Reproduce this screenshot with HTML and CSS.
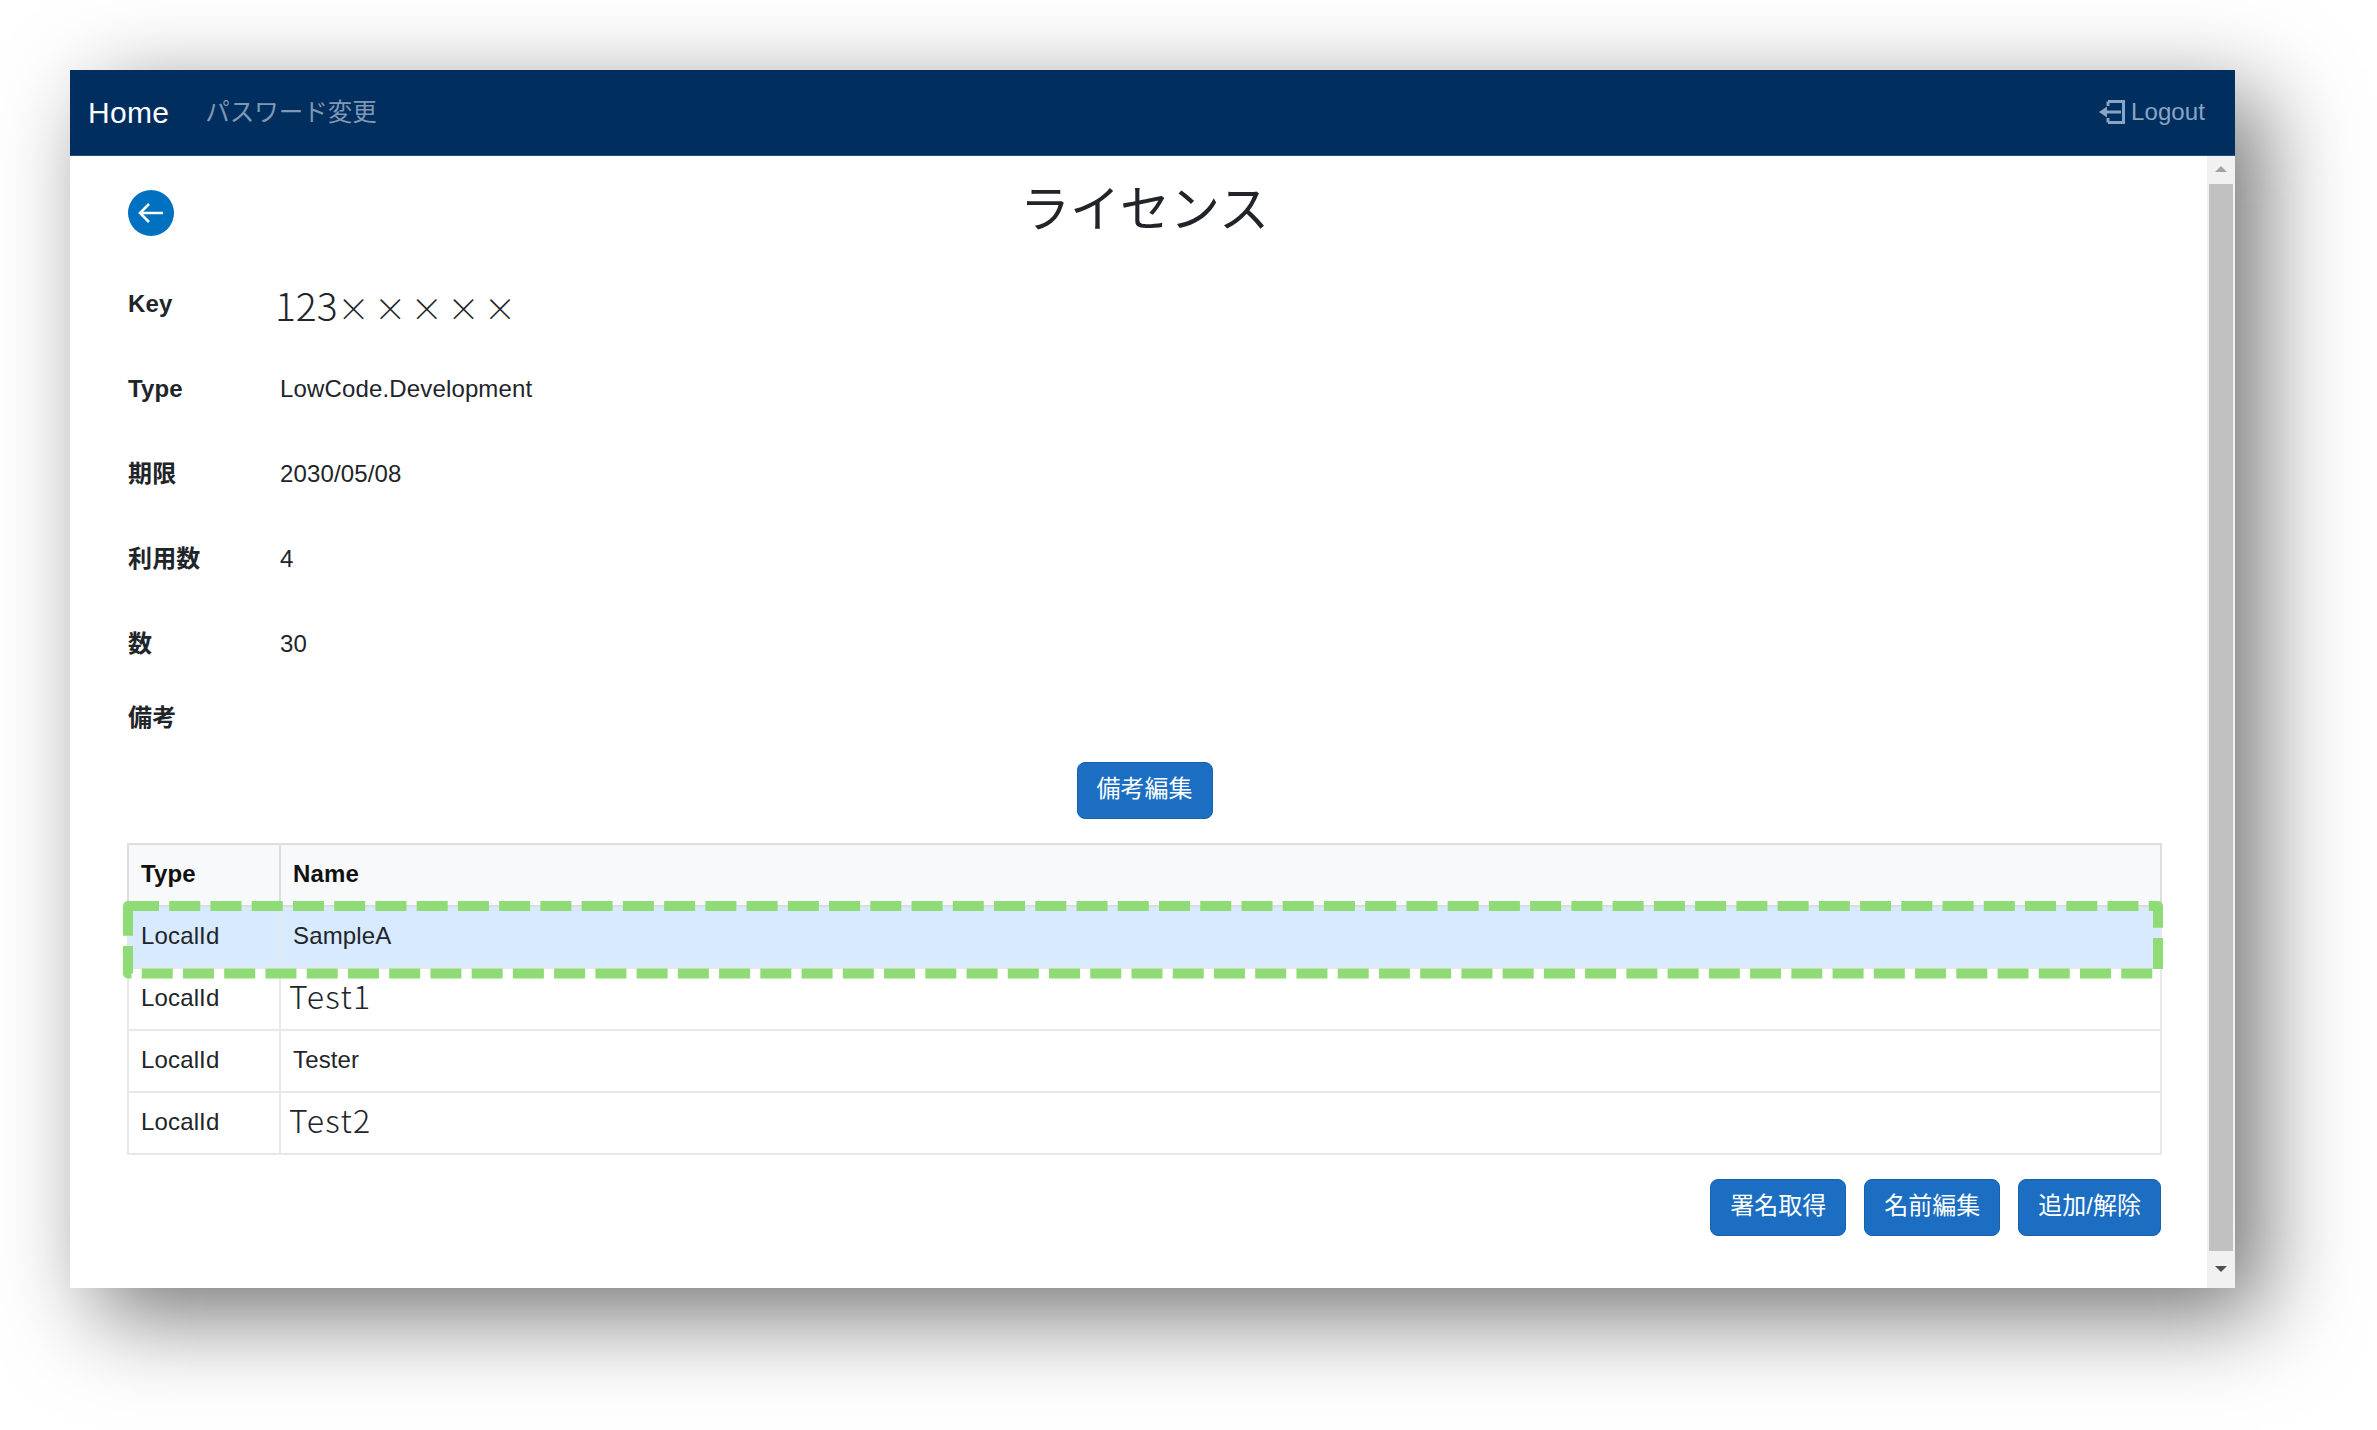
FILE: index.html
```html
<!DOCTYPE html>
<html lang="ja">
<head>
  <meta charset="UTF-8">
  <title>ライセンス</title>
  <link rel="stylesheet" href="styles.css">
</head>
<body>
  <div class="window">
    <nav class="topbar">
      <a class="brand" href="#">Home</a>
      <a class="nav-link" href="#">パスワード変更</a>
      <a class="logout" href="#">
        <svg class="logout-icon" width="26" height="24" viewBox="0 0 26 24">
          <path d="M9 1.5H24.5V22.5H9M9 1.5V6M9 22.5V18" fill="none" stroke="currentColor" stroke-width="3"/>
          <path d="M22 12H7" fill="none" stroke="currentColor" stroke-width="3"/>
          <path d="M0 12L8 6.5V17.5Z" fill="currentColor"/>
        </svg>
        Logout
      </a>
    </nav>

    <div class="pane">
      <main class="content">
        <div class="title-row">
          <a class="back-btn" href="#">
            <svg width="26" height="22" viewBox="0 0 26 22">
              <path d="M25 11H2M11 2L2 11L11 20" fill="none" stroke="#fff" stroke-width="2.6"/>
            </svg>
          </a>
          <h1 class="title">ライセンス</h1>
        </div>

        <div class="info-row">
          <div class="info-label">Key</div>
          <div class="info-value key-value">123<span class="key-mask">×××××</span></div>
        </div>
        <div class="info-row">
          <div class="info-label">Type</div>
          <div class="info-value">LowCode.Development</div>
        </div>
        <div class="info-row">
          <div class="info-label">期限</div>
          <div class="info-value">2030/05/08</div>
        </div>
        <div class="info-row">
          <div class="info-label">利用数</div>
          <div class="info-value">4</div>
        </div>
        <div class="info-row info-row-short">
          <div class="info-label">数</div>
          <div class="info-value">30</div>
        </div>
        <div class="info-row info-row-note">
          <div class="info-label">備考</div>
        </div>

        <div class="note-actions">
          <button class="btn">備考編集</button>
        </div>

        <div class="table-wrap">
          <table class="license-table">
            <thead>
              <tr><th class="col-type">Type</th><th>Name</th></tr>
            </thead>
            <tbody>
              <tr class="selected"><td>LocalId</td><td>SampleA</td></tr>
              <tr><td>LocalId</td><td><span class="mask-text">Test1</span></td></tr>
              <tr><td>LocalId</td><td>Tester</td></tr>
              <tr><td>LocalId</td><td><span class="mask-text">Test2</span></td></tr>
            </tbody>
          </table>
          <svg class="highlight" width="2040" height="78" viewBox="0 0 2040 78">
            <path d="M5 5H2035V72.5H5Z" fill="none" stroke="#8fdb76" stroke-width="10" stroke-linejoin="round" stroke-dasharray="31 10.24"/>
          </svg>
        </div>

        <div class="table-actions">
          <button class="btn">署名取得</button>
          <button class="btn">名前編集</button>
          <button class="btn">追加/解除</button>
        </div>
      </main>

      <div class="scrollbar">
        <div class="scroll-arrow scroll-up"></div>
        <div class="scroll-thumb"></div>
        <div class="scroll-arrow scroll-down"></div>
      </div>
    </div>
  </div>
</body>
</html>
```

FILE: styles.css
```css
html, body {
  height: 100%;
}

body {
  margin: 0;
  padding: 70px 142px 0 70px;
  box-sizing: border-box;
  background-color: #fff;
  color: #212529;
  font-family: "Liberation Sans", "Noto Sans CJK JP", sans-serif;
  font-size: 24px;
  line-height: 36px;
  overflow: hidden;
}

.window {
  height: 1218px;
  display: flex;
  flex-direction: column;
  background-color: #fff;
  box-shadow: 27px 27px 87px rgba(0, 0, 0, 0.55);
}

.topbar {
  height: 86px;
  box-sizing: border-box;
  border-bottom: 1px solid #24507f;
  background-color: #002e5f;
  display: flex;
  align-items: center;
  padding: 0 30px 0 18px;
}

.topbar a {
  text-decoration: none;
}

.brand {
  color: #fff;
  font-size: 30px;
  letter-spacing: 0.3px;
  margin-right: 36px;
}

.nav-link {
  color: #7f98b4;
  font-size: 24.5px;
}

.logout {
  margin-left: auto;
  padding-bottom: 2px;
  color: #8aa5c4;
  display: flex;
  align-items: center;
  letter-spacing: 0.1px;
}

.logout-icon {
  margin-right: 6px;
}

.pane {
  flex: 1;
  display: flex;
  min-height: 0;
}

.content {
  flex: 1;
  padding: 15px 46px 0 58px;
  min-width: 0;
}

.title-row {
  display: grid;
  grid-template-columns: 46px 1fr 46px;
  margin-bottom: 40px;
}

.back-btn {
  width: 46px;
  height: 46px;
  margin-top: 19px;
  border-radius: 50%;
  background-color: #0071c1;
  display: flex;
  align-items: center;
  justify-content: center;
}

.title {
  margin: 3px 0 0;
  text-align: center;
  font-size: 50px;
  font-weight: 400;
  line-height: 72px;
}

.info-row {
  display: flex;
  height: 36px;
  margin-bottom: 49px;
  letter-spacing: 0.15px;
}

.info-row-short {
  margin-bottom: 38px;
}

.info-row-note {
  margin-bottom: 26px;
}

.info-label {
  width: 152px;
  font-weight: bold;
}

.key-value {
  margin-left: -5px;
  font-family: "Noto Sans CJK JP", sans-serif;
  font-size: 39px;
  font-weight: 300;
  line-height: 37px;
  letter-spacing: 0;
}

.key-mask {
  font-size: 32px;
  letter-spacing: 4.6px;
}

.note-actions {
  display: flex;
  justify-content: center;
  margin-bottom: 24px;
}

.btn {
  height: 57px;
  padding: 0 19px 4px;
  border: 1px solid #1861ac;
  border-radius: 8px;
  background-color: #1b6ec2;
  color: #fff;
  font-family: inherit;
  font-size: 24px;
  line-height: 36px;
}

.table-wrap {
  position: relative;
  margin: 0 -1px 24px;
}

.license-table {
  width: 100%;
  border-collapse: collapse;
  table-layout: fixed;
  letter-spacing: 0.15px;
}

.license-table th,
.license-table td {
  height: 62px;
  box-sizing: border-box;
  padding: 0 12px 3px;
  border: 2px solid #e6e9ec;
  text-align: left;
}

.license-table thead th {
  background-color: #f8f9fa;
  border-color: #dcdddf;
  color: #111;
}

.col-type {
  width: 152px;
}

.selected td {
  background-color: #d8eaff;
}

.mask-text {
  margin-left: -4px;
  font-family: "Noto Sans CJK JP", sans-serif;
  font-size: 32px;
  font-weight: 300;
  letter-spacing: 1.3px;
}

.highlight {
  position: absolute;
  left: -4px;
  top: 58px;
  overflow: visible;
}

.table-actions {
  display: flex;
  justify-content: flex-end;
  gap: 18px;
}

.scrollbar {
  width: 28px;
  background-color: #f1f1f1;
  display: flex;
  flex-direction: column;
  align-items: center;
}

.scroll-arrow {
  width: 0;
  height: 0;
  border-left: 6px solid transparent;
  border-right: 6px solid transparent;
}

.scroll-up {
  margin: 10px 0 12px;
  border-bottom: 6px solid #a3a3a3;
}

.scroll-thumb {
  flex: 1;
  width: 24px;
  background-color: #c1c1c1;
}

.scroll-down {
  margin: 15px 0 16px;
  border-top: 6px solid #505050;
}
```
